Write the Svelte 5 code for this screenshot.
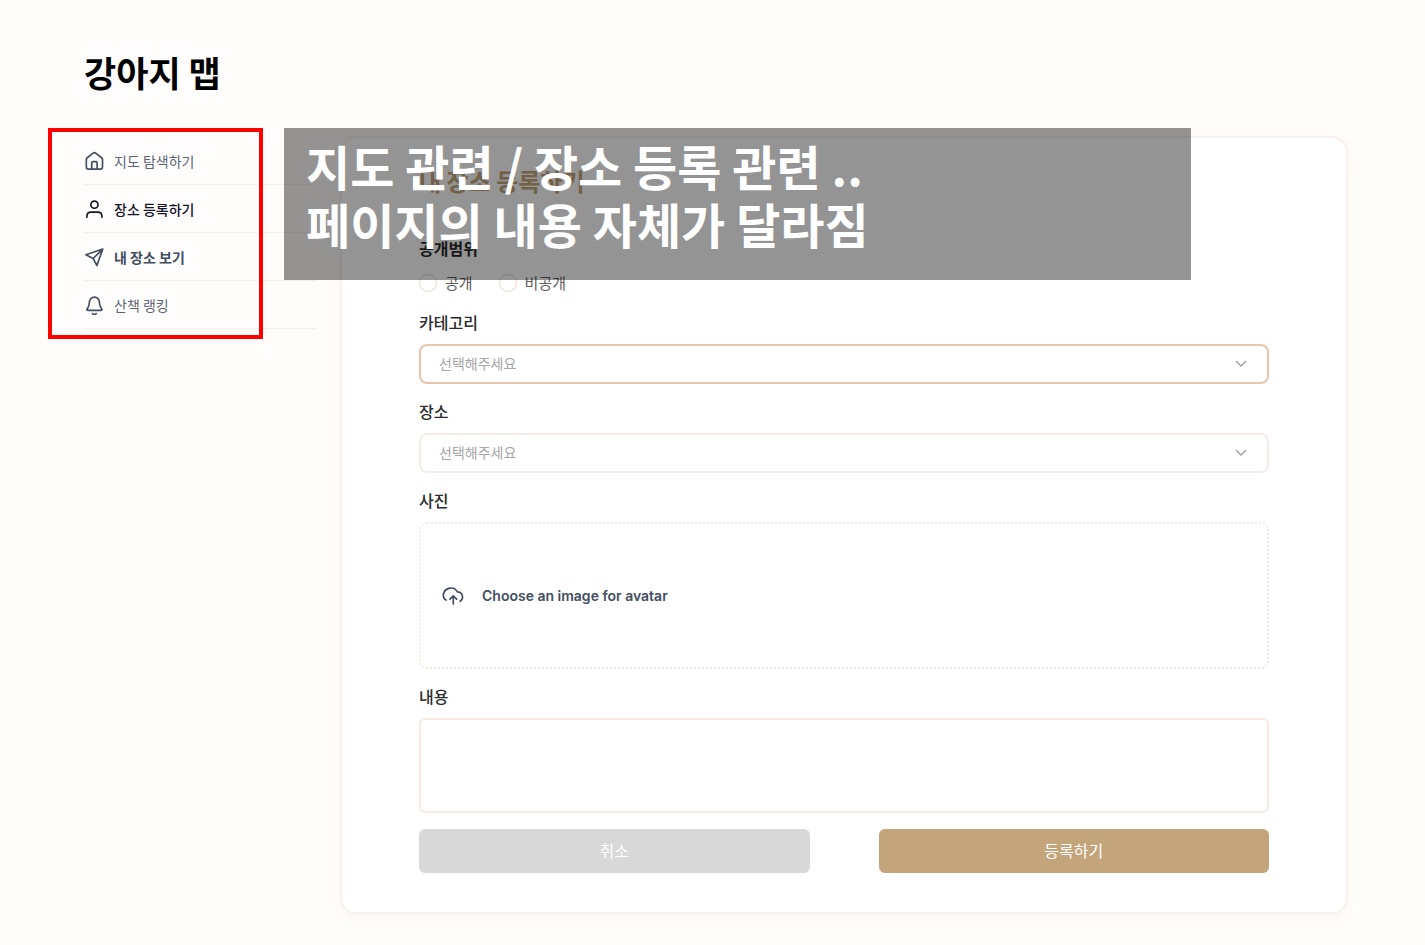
<script lang="ts">
    let visibility = '';
    let category = '';
    let place = '';
    let content = '';

    const menu = [
        { icon: 'home', label: '지도 탐색하기', tone: '' },
        { icon: 'user', label: '장소 등록하기', tone: 'active' },
        { icon: 'send', label: '내 장소 보기', tone: 'strong' },
        { icon: 'bell', label: '산책 랭킹', tone: '' }
    ];
</script>

<div class="page">
    <h1>강아지 맵</h1>

    <div class="layout">
        <nav>
            {#each menu as item}
                <a href="#{item.icon}" class={item.tone}>
                    <svg class="icon" viewBox="0 0 24 24" aria-hidden="true">
                        {#if item.icon === 'home'}
                            <path d="M9.3 21.800v-7.600c0-.9.5-1.400 1.400-1.400h3.600c.9 0 1.400.5 1.400 1.400v7.600M11 2.500 3.900 8.100c-.8.6-1.100 1.300-1.100 2.200v8.700c0 1.800 1 2.800 2.800 2.800h13.800c1.800 0 2.800-1 2.800-2.800v-8.700c0-.9-.3-1.600-1.100-2.200L14 2.500c-.9-.7-2.100-.7-3 0z" />
                        {:else if item.icon === 'user'}
                            <circle cx="12.5" cy="6.8" r="4.3" />
                            <path d="M3.5 22v-1.2c0-3 2.2-5 5-5h8c2.800 0 5 2 5 5V22" />
                        {:else if item.icon === 'send'}
                            <path d="M22.5 2.500 2.300 9.300l8.700 4.500 4.500 8.500zM22.500 2.500 11 13.800" />
                        {:else}
                            <path d="M10.200 22.300c1.400 1 3.200 1 4.600 0M18.500 8.500a6 6 0 0 0-12 0c0 3.100-.8 5.200-1.700 6.600-1 1.500-1.600 2.200-1.500 2.500.1.600.4.900 1.600.9h15.200c1.200 0 1.500-.3 1.600-.9.1-.3-.5-1-1.500-2.500-.9-1.400-1.700-3.500-1.700-6.600z" />
                        {/if}
                    </svg>
                    <span>{item.label}</span>
                </a>
            {/each}
        </nav>

        <form class="card" on:submit|preventDefault>
            <h2>내 장소 등록하기</h2>

            <fieldset class="field">
                <legend>공개범위</legend>
                <div class="radios">
                    <label><input type="radio" value="public" bind:group={visibility} />공개</label>
                    <label><input type="radio" value="private" bind:group={visibility} />비공개</label>
                </div>
            </fieldset>

            <div class="field">
                <label for="category">카테고리</label>
                <div class="select focused">
                    <select id="category" bind:value={category}>
                        <option value="">선택해주세요</option>
                    </select>
                    <svg viewBox="0 0 12 12" aria-hidden="true"><path d="m1.500 3.500 4.500 4.500 4.500-4.500" /></svg>
                </div>
            </div>

            <div class="field">
                <label for="place">장소</label>
                <div class="select">
                    <select id="place" bind:value={place}>
                        <option value="">선택해주세요</option>
                    </select>
                    <svg viewBox="0 0 12 12" aria-hidden="true"><path d="m1.500 3.500 4.500 4.500 4.500-4.500" /></svg>
                </div>
            </div>

            <div class="field">
                <label for="photo">사진</label>
                <label class="upload">
                    <input id="photo" type="file" accept="image/*" />
                    <svg viewBox="0 0 24 24" aria-hidden="true">
                        <path d="M4.500 16.500A5.500 5.500 0 0 1 1.500 11.500 8.200 8.200 0 0 1 16.800 7.500a5.600 5.600 0 0 1 3 10.300M12.300 20.800v-8.800M8.600 15.500l3.700-3.700 3.700 3.700" />
                    </svg>
                    <span>Choose an image for avatar</span>
                </label>
            </div>

            <div class="field">
                <label for="content">내용</label>
                <textarea id="content" bind:value={content}></textarea>
            </div>

            <div class="actions">
                <button type="button" class="cancel">취소</button>
                <button type="submit">등록하기</button>
            </div>
        </form>
    </div>

    <div class="highlight"></div>
    <div class="note">
        <p>지도 관련 / 장소 등록 관련 ..</p>
        <p>페이지의 내용 자체가 달라짐</p>
    </div>
</div>

<style>
    :global(body) {
        background: #fffdfb;
    }

    .page {
        position: relative;
        box-sizing: border-box;
        padding: 48px 77px 31px 84px;
        font-family: 'Noto Sans CJK KR', sans-serif;
        font-size: 14px;
        color: #2b2b2b;
    }

    .page * {
        box-sizing: border-box;
    }

    h1 {
        margin: 0 0 40px;
        font-size: 35px;
        line-height: 48px;
        color: #000;
    }

    .layout {
        display: grid;
        grid-template-columns: 232px 1fr;
        gap: 24px;
        align-items: start;
    }

    nav {
        padding-top: 1px;
    }

    nav a {
        display: flex;
        align-items: center;
        gap: 10px;
        height: 48px;
        border-bottom: 1px solid #f8efe9;
        color: #5b6575;
        text-decoration: none;
    }

    nav a.active {
        color: #14142b;
        font-weight: 500;
    }

    nav a.strong {
        color: #414e62;
        font-weight: 700;
    }

    svg {
        fill: none;
        stroke: currentColor;
        stroke-width: 2;
        stroke-linecap: round;
        stroke-linejoin: round;
    }

    .icon {
        width: 20px;
        height: 20px;
    }

    nav a .icon {
        color: #414e62;
    }

    nav a.active .icon {
        color: #14142b;
    }

    .card {
        padding: 25px 77px 39px;
        border: 2px solid #f8f1ed;
        border-radius: 16px;
        background: #fff;
        box-shadow: 0 4px 12px rgba(120, 90, 60, 0.04);
    }

    h2 {
        margin: 0 0 38px;
        font-size: 24px;
        line-height: 36px;
        color: #c4a57b;
    }

    .field {
        display: flex;
        flex-direction: column;
        gap: 11px;
        margin: 0 0 16px;
        padding: 0;
        border: 0;
    }

    .field > label:first-child,
    legend {
        padding: 0;
        font-size: 16px;
        font-weight: 500;
        line-height: 22px;
    }

    legend {
        margin-bottom: 11px;
        font-weight: 700;
    }

    .radios {
        display: flex;
        gap: 26px;
        height: 25px;
    }

    .radios label {
        display: flex;
        align-items: center;
        gap: 8px;
        font-size: 15px;
        line-height: 22px;
        color: #5e5e5e;
    }

    input[type='radio'] {
        appearance: none;
        width: 18px;
        height: 18px;
        margin: 0;
        border: 1px solid #efd9cd;
        border-radius: 50%;
        background: #fff;
    }

    input[type='radio']:checked {
        border: 5px solid #c4a57b;
    }

    .select {
        position: relative;
        color: #999;
    }

    select {
        appearance: none;
        display: block;
        width: 100%;
        height: 40px;
        padding: 0 40px 2px 18px;
        border: 2px solid #f7ece6;
        border-radius: 8px;
        background: #fff;
        font: inherit;
        color: #a6a6a6;
    }

    .focused select {
        border-color: #eac5ad;
    }

    .select svg {
        position: absolute;
        top: 14px;
        right: 22px;
        width: 12px;
        height: 12px;
        stroke-width: 1.3;
        pointer-events: none;
    }

    .upload {
        display: flex;
        align-items: center;
        gap: 18px;
        height: 147px;
        padding: 0 21px;
        border: 2px dotted #f5ebe5;
        border-radius: 8px;
        color: #414e62;
        font-family: Inter, sans-serif;
        font-weight: 600;
        cursor: pointer;
    }

    .upload input {
        position: absolute;
        width: 1px;
        height: 1px;
        opacity: 0;
    }

    .upload svg {
        width: 22px;
        height: 22px;
        stroke-width: 1.8;
    }

    textarea {
        display: block;
        width: 100%;
        height: 95px;
        padding: 10px 18px;
        border: 2px solid #f6eae3;
        border-radius: 6px;
        background: #fff;
        font: inherit;
        resize: none;
    }

    .actions {
        display: grid;
        grid-template-columns: 1fr 1fr;
        gap: 69px;
    }

    button {
        height: 44px;
        padding: 0 0 2px;
        border: 0;
        border-radius: 6px;
        background: #c4a57b;
        color: #fff;
        font-family: inherit;
        font-size: 16px;
        cursor: pointer;
    }

    .cancel {
        background: #d8d8d8;
    }

    /* notes laid over the page */
    .highlight {
        position: absolute;
        top: 128px;
        left: 48px;
        width: 215px;
        height: 211px;
        border: 4px solid #f00;
        pointer-events: none;
    }

    .note {
        position: absolute;
        top: 128px;
        left: 284px;
        right: 234px;
        height: 152px;
        padding: 8px 22px;
        background: rgba(0, 0, 0, 0.42);
        color: #fff;
        font-size: 48px;
        font-weight: 700;
        line-height: 58px;
        pointer-events: none;
    }

    .note p {
        margin: 0;
    }
</style>
